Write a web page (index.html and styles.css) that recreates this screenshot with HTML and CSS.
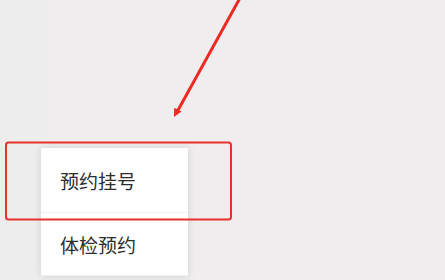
FILE: index.html
```html
<!DOCTYPE html>
<html lang="zh">
<head>
<meta charset="utf-8">
<link rel="stylesheet" href="styles.css">
</head>
<body>
<div class="screen">
  <div class="menu">
    <div class="item first">预约挂号</div>
    <div class="item">体检预约</div>
  </div>
  <svg class="annot" width="445" height="280" viewBox="0 0 445 280">
    <line x1="240" y1="-2" x2="177" y2="112" stroke="#ee2a22" stroke-width="3" stroke-linecap="round"/>
    <polygon points="174,117 181.5,111.5 174.2,107.8" fill="#ee2a22"/>
    <rect x="6" y="142.5" width="225" height="77" rx="2.5" fill="none" stroke="#e8312a" stroke-width="2"/>
  </svg>
</div>
</body>
</html>
```
FILE: styles.css
```css
html, body {
  margin: 0;
  padding: 0;
}
.screen {
  position: relative;
  width: 445px;
  height: 280px;
  overflow: hidden;
  background: linear-gradient(to right, #ededed 50px, #efedee 50px);
  display: flex;
  flex-direction: column;
  font-family: "Noto Sans CJK SC", "Noto Sans", sans-serif;
}
.menu {
  margin-top: 148px;
  margin-left: 41px;
  width: 147px;
  background: #ffffff;
  box-shadow: 0 0 8px rgba(0, 0, 0, 0.12);
}
.item {
  height: 62px;
  display: flex;
  align-items: center;
  padding-left: 19px;
  font-size: 19px;
  color: #2e2e2e;
  border-bottom: 1px solid #eff2f4;
}
.item.first {
  height: 64px;
}
.annot {
  position: absolute;
  left: 0;
  top: 0;
}
```
